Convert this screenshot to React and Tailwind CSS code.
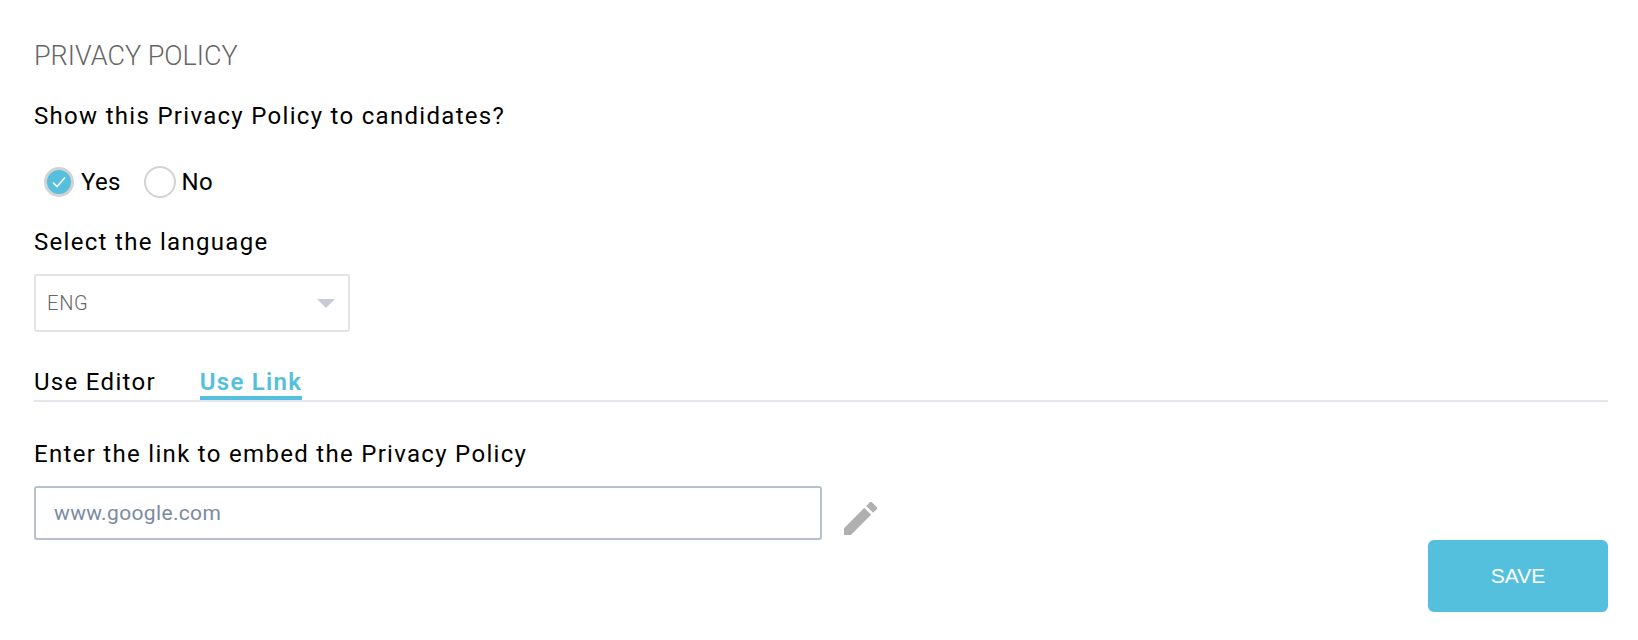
export default function App() {
  return (
    <div className="w-[1638px] h-[640px] bg-white text-black pl-[34px] pr-[30px] pt-[41px] font-['Roboto',sans-serif] text-[24px] leading-[30px] tracking-[1.3px] overflow-hidden">
      <h1 className="text-[27px] leading-[30px] font-light text-[#666666] tracking-normal">PRIVACY POLICY</h1>
      <p className="mt-[30px]">Show this Privacy Policy to candidates?</p>
      <div className="mt-[35px] ml-[10px] flex items-center h-[32px]">
        <span className="w-[30px] h-[30px] rounded-full bg-[#54c0dd] border-[3px] border-[#d2d2d2] flex items-center justify-center">
          <svg width="16" height="14" viewBox="0 0 16 14" fill="none" stroke="white" strokeWidth="1.6"><path d="M2 7.5 L6 11.5 L14 2.5" /></svg>
        </span>
        <span className="ml-[7px] tracking-[0.25px]">Yes</span>
        <span className="ml-[23px] w-[32px] h-[32px] rounded-full bg-white border-[2px] border-[#d2d2d2]"></span>
        <span className="ml-[6px] tracking-[0.25px]">No</span>
      </div>
      <p className="mt-[29px]">Select the language</p>
      <div className="mt-[17px] w-[316px] h-[58px] rounded-[3px] border-[2px] border-[#e4e4e4] pl-[11px] pr-[13px] flex items-center justify-between">
        <span className="text-[20px] font-light text-[#666666] tracking-[0.75px]">ENG</span>
        <span className="w-0 h-0 border-l-[9px] border-r-[9px] border-t-[9px] border-l-transparent border-r-transparent border-t-[#c5ccd6]"></span>
      </div>
      <div className="mt-[35px] flex gap-[44px] border-b-[2px] border-[#e4e7ec] h-[35px] items-start">
        <span className="h-[33px]">Use Editor</span>
        <span className="h-[33px] font-semibold text-[#54c0dd] border-b-[4px] border-[#54c0dd] tracking-[1.25px]">Use Link</span>
      </div>
      <p className="mt-[37px]">Enter the link to embed the Privacy Policy</p>
      <div className="mt-[17px] flex items-center">
        <div className="w-[788px] h-[54px] rounded-[3px] border-[2px] border-[#b8bfcf] pl-[18px] flex items-center text-[21px] text-[#7b8aa3] tracking-[0.35px]">www.google.com</div>
        <svg className="ml-[22px] mt-[10px]" width="33" height="33" viewBox="3 3 18 18" fill="#b0b0b0"><path d="M3 17.25V21h3.75L17.81 9.94l-3.75-3.75L3 17.25zM20.71 7.04a1 1 0 0 0 0-1.41l-2.34-2.34a1 1 0 0 0-1.41 0l-1.83 1.83 3.75 3.75 1.83-1.83z" /></svg>
      </div>
      <div className="flex justify-end">
        <button className="w-[180px] h-[72px] rounded-[6px] bg-[#54c0dd] text-white font-['Liberation_Sans',sans-serif] text-[21px] tracking-normal">SAVE</button>
      </div>
    </div>
  );
}
